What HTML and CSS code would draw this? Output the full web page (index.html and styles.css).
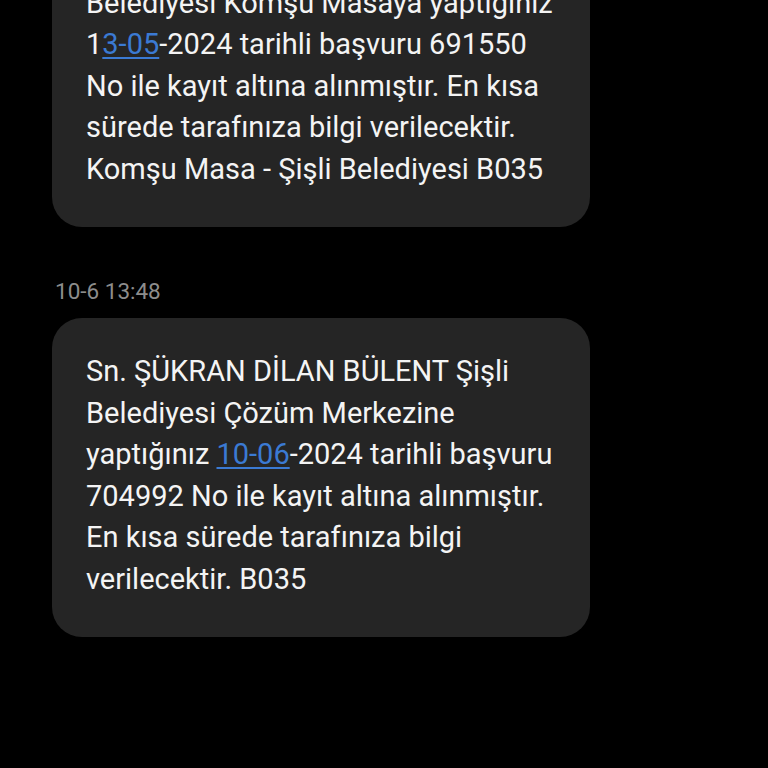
FILE: index.html
```html
<!DOCTYPE html>
<html lang="tr">
<head>
<meta charset="utf-8">
<link rel="stylesheet" href="styles.css">
</head>
<body>
<div class="thread">
  <div class="bubble first">
    <p class="msg">Sn. ŞÜKRAN DİLAN BÜLENT Şişli<br>Belediyesi Komşu Masaya yaptığınız<br>1<span class="link">3-05</span>-2024 tarihli başvuru 691550<br>No ile kayıt altına alınmıştır. En kısa<br>sürede tarafınıza bilgi verilecektir.<br>Komşu Masa - Şişli Belediyesi B035</p>
  </div>
  <div class="time">10-6 13:48</div>
  <div class="bubble">
    <p class="msg">Sn. ŞÜKRAN DİLAN BÜLENT Şişli<br>Belediyesi Çözüm Merkezine<br>yaptığınız <span class="link">10-06</span>-2024 tarihli başvuru<br>704992 No ile kayıt altına alınmıştır.<br>En kısa sürede tarafınıza bilgi<br>verilecektir. B035</p>
  </div>
</div>
</body>
</html>
```

FILE: styles.css
```css
html, body {
  margin: 0;
  padding: 0;
  background: #000;
  height: 100%;
  overflow: hidden;
}
.thread {
  display: flex;
  flex-direction: column;
  align-items: flex-start;
  padding-left: 52px;
  margin-top: -92px;
  font-family: Roboto, "Noto Sans", sans-serif;
}
.bubble {
  width: 538px;
  box-sizing: border-box;
  background: #252525;
  border-radius: 30px;
  padding: 33px 34px 37px 34px;
}
.msg {
  margin: 0;
  color: #f4f4f4;
  font-size: 29px;
  line-height: 41.5px;
  white-space: nowrap;
}
.link {
  color: #3b7ad3;
  text-decoration: underline;
  text-underline-offset: 3px;
}
.time {
  color: #8c8c8c;
  font-size: 22.5px;
  margin: 51px 0 14px 3px;
  line-height: 26px;
}
```
